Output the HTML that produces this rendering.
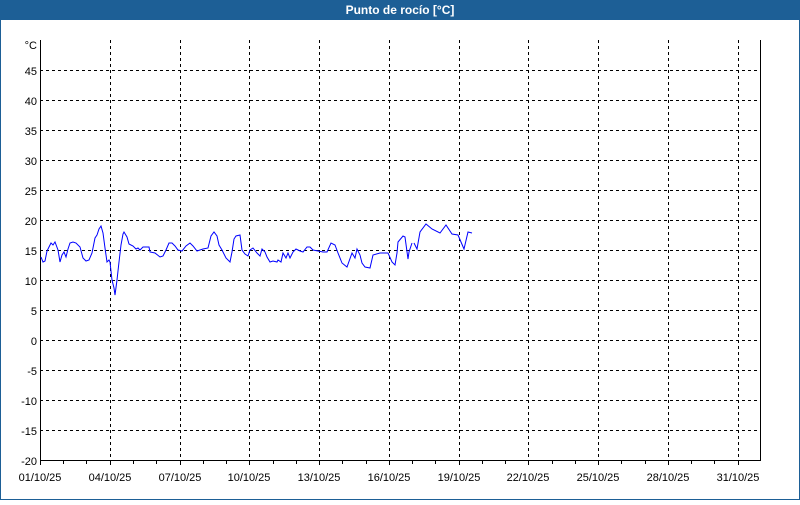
<!DOCTYPE html>
<html><head><meta charset="utf-8"><style>
body{margin:0;width:800px;height:500px;overflow:hidden;background:#fff;font-family:"Liberation Sans",sans-serif}
</style></head><body>
<svg width="800" height="500" xmlns="http://www.w3.org/2000/svg" font-family="Liberation Sans, sans-serif" font-size="11">
<rect x="0" y="0" width="800" height="500" fill="#fff"/>
<rect x="0.5" y="0.5" width="799" height="499" fill="none" stroke="#1d5f96"/>
<rect x="0" y="0" width="800" height="20" fill="#1d5f96"/>
<text x="400" y="14" text-anchor="middle" fill="#fff" font-weight="bold" font-size="12">Punto de rocío [°C]</text>
<g stroke="#000" stroke-dasharray="3,3" stroke-width="1">
<path d="M40 70.5H760M40 100.5H760M40 130.5H760M40 160.5H760M40 190.5H760M40 220.5H760M40 250.5H760M40 280.5H760M40 310.5H760M40 340.5H760M40 370.5H760M40 400.5H760M40 430.5H760"/>
<path d="M110.5 40V460M180.5 40V460M249.5 40V460M319.5 40V460M389.5 40V460M459.5 40V460M528.5 40V460M598.5 40V460M668.5 40V460M738.5 40V460"/>
</g>
<path d="M40.5 40V460.5H760.5V40" fill="none" stroke="#000"/>
<g stroke="#000"><path d="M40.5 460v5M63.5 460v4M86.5 460v4M110.5 460v5M133.5 460v4M156.5 460v4M180.5 460v5M203.5 460v4M226.5 460v4M249.5 460v5M273.5 460v4M296.5 460v4M319.5 460v5M342.5 460v4M366.5 460v4M389.5 460v5M412.5 460v4M435.5 460v4M459.5 460v5M482.5 460v4M505.5 460v4M528.5 460v5M552.5 460v4M575.5 460v4M598.5 460v5M621.5 460v4M645.5 460v4M668.5 460v5M691.5 460v4M714.5 460v4M738.5 460v5"/></g>
<g text-anchor="end" fill="#000">
<text x="37" y="49">°C</text>
<text x="37" y="75">45</text><text x="37" y="105">40</text><text x="37" y="135">35</text><text x="37" y="165">30</text><text x="37" y="195">25</text><text x="37" y="225">20</text><text x="37" y="255">15</text><text x="37" y="285">10</text><text x="37" y="315">5</text><text x="37" y="345">0</text><text x="37" y="375">-5</text><text x="37" y="405">-10</text><text x="37" y="435">-15</text><text x="37" y="465">-20</text>
</g>
<g text-anchor="middle" fill="#000">
<text x="40" y="481">01/10/25</text><text x="110" y="481">04/10/25</text><text x="180" y="481">07/10/25</text><text x="249" y="481">10/10/25</text><text x="319" y="481">13/10/25</text><text x="389" y="481">16/10/25</text><text x="459" y="481">19/10/25</text><text x="528" y="481">22/10/25</text><text x="598" y="481">25/10/25</text><text x="668" y="481">28/10/25</text><text x="738" y="481">31/10/25</text>
</g>
<polyline fill="none" stroke="#0000ff" stroke-width="1" points="41,257 43,262 45,261 47,251 49,247 51,243 53,245 55,242 58,250 60,262 62,255 64,252 66,257 68,249 70,243 73,242 76,243 80,247 83,258 86,261 89,260 92,253 95,238 97,235 99,229 101,226 103,233 105,248 107,262 109,260 110,262 112,280 114,288 115,295 117,280 119,262 121,245 123,234 124,232 127,237 129,244 133,246 136,249 138,248 140,250 143,247 147,247 149,247 150,252 155,253 160,257 163,256 166,250 169,243 172,243 175,246 178,250 182,251 186,246 190,243 193,246 197,251 203,249 208,248 211,236 214,232 217,236 219,245 222,250 226,258 230,262 232,252 234,239 236,236 240,235 242,250 245,254 248,256 250,250 253,248 257,253 260,256 262,249 265,252 267,257 270,262 273,261 277,262 278,260 281,262 283,253 286,258 288,253 290,258 293,252 296,249 300,251 303,252 307,247 310,247 313,250 318,251 323,252 327,252 331,243 335,245 338,253 342,263 347,267 352,253 355,258 357,249 360,255 362,263 365,267 370,268 373,255 380,253 383,253 388,253 392,262 395,265 397,253 398,242 403,236 405,237 408,259 409,252 412,243"/>
<polyline fill="none" stroke="#0000ff" stroke-width="1" points="414,243 417,249 420,232 426,224 432,229 440,233 446,225 452,234 458,235 464,249 468,232 472,233"/>
</svg>
</body></html>
